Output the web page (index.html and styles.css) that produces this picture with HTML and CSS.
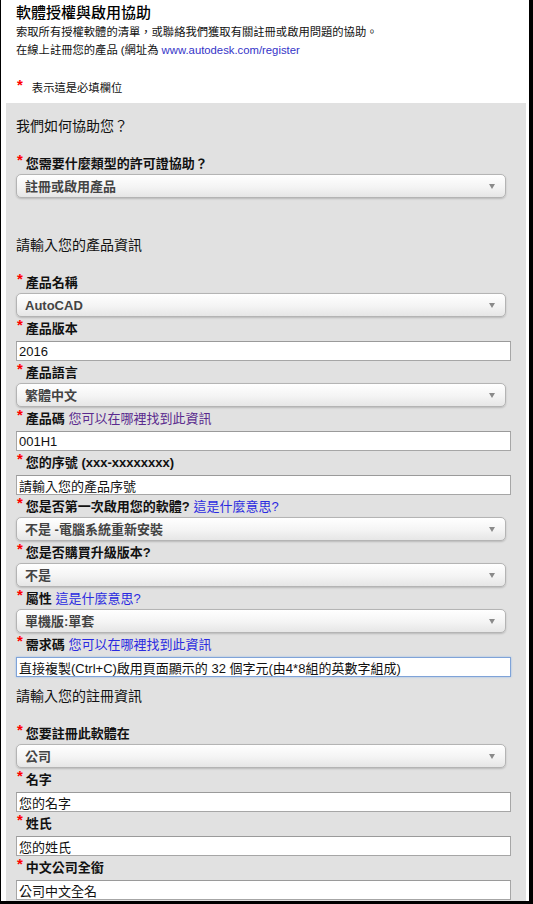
FILE: index.html
```html
<!DOCTYPE html>
<html lang="zh-Hant">
<head>
    <meta charset="UTF-8">
    <meta name="viewport" content="width=device-width, initial-scale=1.0">
    <title>軟體授權與啟用協助</title>
    <link rel="stylesheet" href="styles.css">
</head>
<body>
    <div class="page">
        <div class="intro">
            <h1 class="title">軟體授權與啟用協助</h1>
            <p>索取所有授權軟體的清單，或聯絡我們獲取有關註冊或啟用問題的協助。</p>
            <p>在線上註冊您的產品 (網址為 <a class="link" href="#">www.autodesk.com/register</a></p>
            <p class="req-note"><span class="star">*</span>表示這是必填欄位</p>
        </div>

        <form class="panel">
            <section class="section section-help">
                <h2 class="section-title">我們如何協助您？</h2>
                <div class="field">
                    <label class="label"><span class="star">*</span>您需要什麼類型的許可證協助？</label>
                    <div class="select-wrap">
                        <select class="select"><option>註冊或啟用產品</option></select>
                    </div>
                </div>
            </section>

            <section class="section section-product">
                <h2 class="section-title">請輸入您的產品資訊</h2>
                <div class="field">
                    <label class="label"><span class="star">*</span>產品名稱</label>
                    <div class="select-wrap">
                        <select class="select"><option>AutoCAD</option></select>
                    </div>
                </div>
                <div class="field">
                    <label class="label"><span class="star">*</span>產品版本</label>
                    <input class="input" type="text" value="2016">
                </div>
                <div class="field">
                    <label class="label"><span class="star">*</span>產品語言</label>
                    <div class="select-wrap">
                        <select class="select"><option>繁體中文</option></select>
                    </div>
                </div>
                <div class="field">
                    <label class="label"><span class="star">*</span>產品碼 <a class="hint visited" href="#">您可以在哪裡找到此資訊</a></label>
                    <input class="input" type="text" value="001H1">
                </div>
                <div class="field">
                    <label class="label"><span class="star">*</span>您的序號 (xxx-xxxxxxxx)</label>
                    <input class="input" type="text" value="請輸入您的產品序號">
                </div>
                <div class="field">
                    <label class="label"><span class="star">*</span>您是否第一次啟用您的軟體? <a class="hint" href="#">這是什麼意思?</a></label>
                    <div class="select-wrap">
                        <select class="select"><option>不是 -電腦系統重新安裝</option></select>
                    </div>
                </div>
                <div class="field">
                    <label class="label"><span class="star">*</span>您是否購買升級版本?</label>
                    <div class="select-wrap">
                        <select class="select"><option>不是</option></select>
                    </div>
                </div>
                <div class="field">
                    <label class="label"><span class="star">*</span>屬性 <a class="hint" href="#">這是什麼意思?</a></label>
                    <div class="select-wrap">
                        <select class="select"><option>單機版:單套</option></select>
                    </div>
                </div>
                <div class="field">
                    <label class="label"><span class="star">*</span>需求碼 <a class="hint" href="#">您可以在哪裡找到此資訊</a></label>
                    <input class="input focused" type="text" value="直接複製(Ctrl+C)啟用頁面顯示的 32 個字元(由4*8組的英數字組成)">
                </div>
            </section>

            <section class="section section-register">
                <h2 class="section-title">請輸入您的註冊資訊</h2>
                <div class="field">
                    <label class="label"><span class="star">*</span>您要註冊此軟體在</label>
                    <div class="select-wrap">
                        <select class="select"><option>公司</option></select>
                    </div>
                </div>
                <div class="field">
                    <label class="label"><span class="star">*</span>名字</label>
                    <input class="input" type="text" value="您的名字">
                </div>
                <div class="field">
                    <label class="label"><span class="star">*</span>姓氏</label>
                    <input class="input" type="text" value="您的姓氏">
                </div>
                <div class="field">
                    <label class="label"><span class="star">*</span>中文公司全銜</label>
                    <input class="input" type="text" value="公司中文全名">
                </div>
            </section>
        </form>
    </div>
</body>
</html>
```

FILE: styles.css
```css
html, body {
    margin: 0;
    padding: 0;
    background: #000;
}
body {
    font-family: "Liberation Sans", "Noto Sans CJK TC", sans-serif;
    color: #111;
    overflow: hidden;
}
.page {
    margin: 0 4px 0 1px;
    height: 901px;
    overflow: hidden;
    background: #fff;
}
.intro {
    padding: 3px 0 6px 15px;
}
.title {
    margin: 0;
    font-size: 15px;
    font-weight: 500;
    line-height: 20px;
    color: #000;
}
.intro p {
    margin: 0;
    font-size: 11.3px;
    line-height: 18px;
}
.link {
    color: #3434c8;
    text-decoration: none;
}
.intro .req-note {
    margin-top: 20px;
    padding-left: 1px;
}
.req-note .star {
    margin-right: 9px;
}
.star {
    color: #f00;
    font-size: 15px;
    font-weight: bold;
    line-height: 12px;
    vertical-align: top;
    margin-right: 3px;
}
.panel {
    margin: 0 3px 0 5px;
    padding: 13px 15px 0 10px;
    background: #e1e1e1;
    min-height: 800px;
}
.section-title {
    margin: 0 0 16px;
    font-size: 14px;
    font-weight: normal;
    line-height: 20px;
    color: #111;
}
.section-help {
    margin-bottom: 37px;
}
.section-product {
    margin-bottom: 9px;
}
.field {
    display: flex;
    flex-direction: column;
}
.label {
    display: block;
    padding-top: 2px;
    padding-left: 1px;
    font-size: 13px;
    font-weight: bold;
    line-height: 20px;
    color: #111;
}
.hint {
    font-weight: normal;
    color: #2a2ae0;
    text-decoration: none;
}
.hint.visited {
    color: #5a2a8e;
}
.select-wrap {
    position: relative;
    width: 490px;
}
.select-wrap::after {
    content: "";
    position: absolute;
    right: 11px;
    top: 10px;
    border-left: 3px solid transparent;
    border-right: 3px solid transparent;
    border-top: 5px solid #8a8a8a;
    pointer-events: none;
}
.select {
    display: block;
    width: 490px;
    height: 24px;
    margin: 0;
    padding: 0 0 0 8px;
    -webkit-appearance: none;
    appearance: none;
    border: 1px solid #b4b4b4;
    border-radius: 5px;
    background: linear-gradient(#ffffff, #f4f4f4 55%, #e6e6e6);
    box-shadow: 0 1px 2px rgba(0, 0, 0, 0.18);
    font-family: inherit;
    font-size: 13px;
    font-weight: bold;
    color: #444;
    outline: none;
}
.input {
    display: block;
    box-sizing: border-box;
    width: 495px;
    height: 20px;
    margin: 2px 0 0;
    padding: 0 0 0 2px;
    border: 1px solid #a6a6a6;
    border-top-color: #9a9a9a;
    background: #fff;
    font-family: inherit;
    font-size: 13px;
    color: #111;
    outline: none;
}
.input.focused {
    border-color: #7fa3d8;
    box-shadow: 0 0 2px #9dbde8;
}
```
